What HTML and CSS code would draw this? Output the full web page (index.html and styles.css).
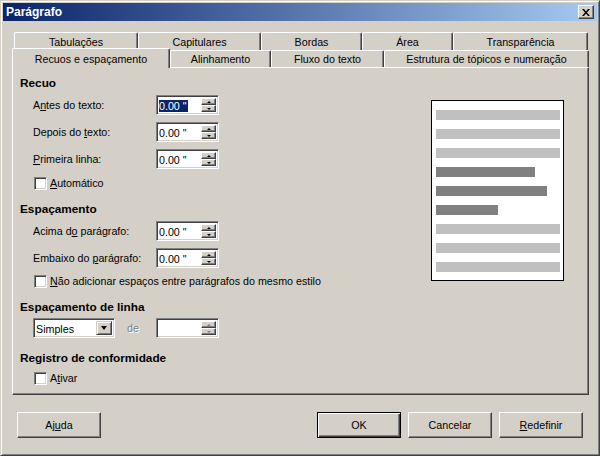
FILE: index.html
```html
<!DOCTYPE html>
<html lang="pt">
<head>
<meta charset="utf-8">
<title>Parágrafo</title>
<link rel="stylesheet" href="styles.css">
</head>
<body>
<div class="window">
  <div class="titlebar">
    <span class="title">Parágrafo</span>
    <div class="close"><svg width="8" height="7" viewBox="0 0 8 7"><path d="M0 0h2l2 2.5L6 0h2L5 3.5 8 7H6L4 4.5 2 7H0l3-3.5z" fill="#000"/></svg></div>
  </div>
  <div class="main">
    <div class="tabs">
      <div class="tabrow row1">
        <div class="tab w-tab">Tabulações</div>
        <div class="tab w-cap">Capitulares</div>
        <div class="tab w-bor">Bordas</div>
        <div class="tab w-are">Área</div>
        <div class="tab w-tra">Transparência</div>
      </div>
      <div class="tabrow row2">
        <div class="tab sel w-rec">Recuos e espaçamento</div>
        <div class="tab w-ali">Alinhamento</div>
        <div class="tab w-flu">Fluxo do texto</div>
        <div class="tab w-est">Estrutura de tópicos e numeração</div>
      </div>
    </div>
    <div class="panel">
      <div class="form">
        <div class="h h-recuo">Recuo</div>
        <div class="row r1">
          <span class="lbl">A<u>n</u>tes do texto:</span>
          <div class="spin"><span class="val"><span class="hl">0.00 "</span></span><div class="arrows"><span class="up"></span><span class="dn"></span></div></div>
        </div>
        <div class="row r2">
          <span class="lbl">Depois do <u>t</u>exto:</span>
          <div class="spin"><span class="val">0.00 "</span><div class="arrows"><span class="up"></span><span class="dn"></span></div></div>
        </div>
        <div class="row r3">
          <span class="lbl"><u>P</u>rimeira linha:</span>
          <div class="spin"><span class="val">0.00 "</span><div class="arrows"><span class="up"></span><span class="dn"></span></div></div>
        </div>
        <div class="chk c1"><span class="cb"></span><span><u>A</u>utomático</span></div>

        <div class="h h-esp">Espaçamento</div>
        <div class="row r4">
          <span class="lbl">Acima d<u>o</u> parágrafo:</span>
          <div class="spin"><span class="val">0.00 "</span><div class="arrows"><span class="up"></span><span class="dn"></span></div></div>
        </div>
        <div class="row r5">
          <span class="lbl">Embaixo do <u>p</u>arágrafo:</span>
          <div class="spin"><span class="val">0.00 "</span><div class="arrows"><span class="up"></span><span class="dn"></span></div></div>
        </div>
        <div class="chk c2"><span class="cb"></span><span><u>N</u>ão adicionar espaços entre parágrafos do mesmo estilo</span></div>

        <div class="h h-lin">Espaçamento de linha</div>
        <div class="row r6">
          <div class="combo"><span class="val">Simples</span><span class="ddbtn"><span class="tri"></span></span></div>
          <span class="de">de</span>
          <div class="spin off"><span class="val"></span><div class="arrows"><span class="up"></span><span class="dn"></span></div></div>
        </div>

        <div class="h h-reg">Registro de conformidade</div>
        <div class="chk c3"><span class="cb"></span><span>A<u>t</u>ivar</span></div>
      </div>
      <div class="preview">
        <div class="bar"></div>
        <div class="bar"></div>
        <div class="bar"></div>
        <div class="bar dark d1"></div>
        <div class="bar dark d2"></div>
        <div class="bar dark d3"></div>
        <div class="bar"></div>
        <div class="bar"></div>
        <div class="bar"></div>
      </div>
    </div>
    <div class="buttons">
      <div class="btn">Aj<u>u</u>da</div>
      <div class="btn def push">OK</div>
      <div class="btn">Cancelar</div>
      <div class="btn"><u>R</u>edefinir</div>
    </div>
  </div>
</div>
</body>
</html>
```

FILE: styles.css
```css
* { box-sizing: border-box; }

body {
  margin: 0;
  background: #d4d0c8;
  font-family: "Liberation Sans", Arial, sans-serif;
  font-size: 10.7px;
  color: #000;
}

u { text-decoration: underline; text-underline-offset: 1px; }

.window {
  width: 600px;
  height: 456px;
  border: 1px solid;
  border-color: #d4d0c8 #404040 #404040 #d4d0c8;
  box-shadow: inset 1px 1px #fff, inset -1px -1px #808080;
  padding: 2px;
  display: flex;
  flex-direction: column;
}

.titlebar {
  height: 18px;
  flex: none;
  background: linear-gradient(to right, #0a246a, #a6caf0);
  display: flex;
  align-items: center;
  justify-content: space-between;
  padding: 0 3px 0 3px;
}

.title {
  color: #fff;
  font-weight: bold;
  font-size: 12px;
}

.close {
  width: 16px;
  height: 14px;
  background: #d4d0c8;
  border: 1px solid;
  border-color: #fff #404040 #404040 #fff;
  box-shadow: inset -1px -1px #808080;
  display: flex;
  align-items: center;
  justify-content: center;
}

.main {
  flex: 1;
  display: flex;
  flex-direction: column;
  padding: 11px 8px 0 9px;
}

/* tabs */
.tabs {
  height: 35px;
  display: flex;
  flex-direction: column;
}

.tabrow {
  display: flex;
  align-items: flex-start;
}

.row1 { height: 18px; padding-left: 2px; }
.row2 { height: 17px; }

.tab {
  height: 100%;
  background: #d4d0c8;
  border-top: 1px solid #fff;
  border-left: 1px solid #fff;
  border-right: 1px solid #404040;
  box-shadow: inset -1px 0 #808080;
  border-radius: 2px 2px 0 0;
  display: flex;
  align-items: center;
  justify-content: center;
  white-space: nowrap;
}

.row1 .tab { height: 18px; }
.row2 .tab { height: 17px; }

.row2 .tab.sel {
  height: 20px;
  margin-top: -2px;
  position: relative;
  z-index: 1;
}

.w-tab { width: 124px; }
.w-cap { width: 123px; }
.w-bor { width: 101px; }
.w-are { width: 91px; }
.w-tra { width: 135px; }
.w-rec { width: 158px; }
.w-ali { width: 101px; }
.w-flu { width: 113px; }
.w-est { width: 205px; }

/* panel */
.panel {
  height: 328px;
  border: 1px solid;
  border-color: #fff #404040 #404040 #fff;
  box-shadow: inset -1px -1px #808080;
  display: flex;
  justify-content: space-between;
  align-items: flex-start;
}

.form {
  display: flex;
  flex-direction: column;
  padding: 8px 0 0 7px;
}

.h {
  font-weight: bold;
  font-size: 11.8px;
  height: 14px;
  line-height: 14px;
}

.row {
  display: flex;
  align-items: center;
  height: 20px;
  padding-left: 13px;
}

.lbl { width: 123px; }

.r1 { margin-top: 5px; }
.r2 { margin-top: 7px; }
.r3 { margin-top: 7px; }
.c1 { margin-top: 7px; }
.h-esp { margin-top: 12px; }
.r4 { margin-top: 5px; }
.r5 { margin-top: 7px; }
.c2 { margin-top: 6px; }
.h-lin { margin-top: 12px; }
.r6 { margin-top: 4px; }
.h-reg { margin-top: 13px; }
.c3 { margin-top: 6px; }

.chk {
  display: flex;
  align-items: center;
  height: 14px;
  padding-left: 14px;
  gap: 3px;
}

.cb {
  width: 13px;
  height: 13px;
  background: #fff;
  border: 1px solid;
  border-color: #808080 #fff #fff #808080;
  box-shadow: inset 1px 1px #404040, inset -1px -1px #d4d0c8;
}

/* spin field */
.spin, .combo {
  height: 20px;
  background: #fff;
  border: 1px solid;
  border-color: #808080 #fff #fff #808080;
  box-shadow: inset 1px 1px #404040, inset -1px -1px #d4d0c8;
  display: flex;
  padding: 2px 2px 2px 2px;
}

.spin { width: 63px; }
.combo { width: 82px; }

.val {
  flex: 1;
  line-height: 16px;
  padding-left: 0;
  white-space: pre;
}

.hl {
  background: #0a246a;
  color: #fff;
  padding-right: 1px;
}

.arrows {
  width: 15px;
  display: flex;
  flex-direction: column;
}

.up, .dn {
  flex: 1;
  background: #d4d0c8;
  border: 1px solid;
  border-color: #fff #404040 #404040 #fff;
  box-shadow: inset -1px -1px #808080;
  display: flex;
  align-items: center;
  justify-content: center;
}

.up::after, .dn::after {
  content: "";
  width: 0;
  height: 0;
  border-left: 2px solid transparent;
  border-right: 2px solid transparent;
}

.up::after { border-bottom: 2px solid #000; }
.dn::after { border-top: 2px solid #000; }

.off .up::after { border-bottom-color: #808080; }
.off .dn::after { border-top-color: #808080; }

.ddbtn {
  width: 16px;
  background: #d4d0c8;
  border: 1px solid;
  border-color: #d4d0c8 #404040 #404040 #d4d0c8;
  box-shadow: inset 1px 1px #fff, inset -1px -1px #808080;
  display: flex;
  align-items: center;
  justify-content: center;
}

.tri {
  width: 0;
  height: 0;
  border-left: 3.5px solid transparent;
  border-right: 3.5px solid transparent;
  border-top: 4px solid #000;
}

.de {
  width: 41px;
  padding-left: 12px;
  color: #808080;
  text-shadow: 1px 1px #fff;
}

/* preview */
.preview {
  margin: 32px 24px 0 0;
  width: 133px;
  height: 181px;
  border: 1px solid #000;
  background: #fff;
  padding: 9px 3px 8px 4px;
  display: flex;
  flex-direction: column;
  gap: 9px;
}

.bar {
  height: 10px;
  background: #c0c0c0;
  flex: none;
}

.bar.dark { background: #808080; }
.d1 { width: 99px; }
.d2 { width: 111px; }
.d3 { width: 62px; }

/* buttons */
.buttons {
  display: flex;
  gap: 7px;
  margin-top: 17px;
  padding: 0 6px 0 5px;
}

.btn {
  width: 84px;
  height: 26px;
  background: #d4d0c8;
  border: 1px solid;
  border-color: #fff #404040 #404040 #fff;
  box-shadow: inset -1px -1px #808080;
  display: flex;
  align-items: center;
  justify-content: center;
}

.btn.def {
  border-color: #000;
  box-shadow: inset 1px 1px #fff, inset -1px -1px #404040, inset -2px -2px #808080;
}

.push { margin-left: auto; }
```
